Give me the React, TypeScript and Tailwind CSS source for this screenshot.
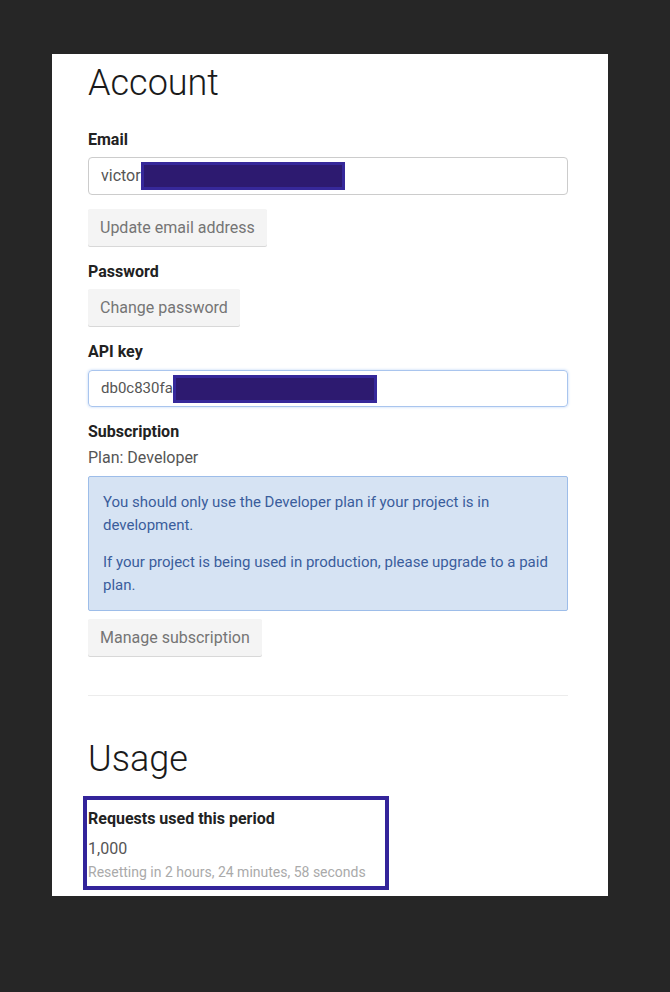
import React from 'react';

const Redacted = ({ width }: { width: number }) => (
  <span
    className="inline-block h-[28px] border-[3px] border-[#36289a] bg-[#2d1a70] align-middle"
    style={{ width }}
  />
);

const Label = ({ children }: { children: React.ReactNode }) => (
  <div className="text-[16px] font-bold leading-5 text-[#222]">{children}</div>
);

const GrayButton = ({ children }: { children: React.ReactNode }) => (
  <button className="h-[37px] rounded-[2px] bg-[#f4f4f4] px-3 text-[16px] text-[#757575] shadow-[0_1px_0_#d8d8d8]">
    {children}
  </button>
);

export default function App() {
  return (
    <div
      className="min-h-[992px] bg-[#262626] pt-[54px]"
      style={{ fontFamily: 'Roboto, "Liberation Sans", sans-serif' }}
    >
      <div className="ml-[52px] w-[556px] bg-white pb-[6px] pl-[36px] pr-[40px] pt-[7px]">
        {/* Account */}
        <h1 className="text-[36px] font-light leading-[44px] text-[#1a1a1a]">Account</h1>

        <div className="mt-[25px]">
          <Label>Email</Label>
          <div className="mt-[7px] flex h-[38px] items-center rounded-[4px] border border-[#cccccc] pl-[12px] text-[16px] text-[#555]">
            victor
            <Redacted width={204} />
          </div>
          <div className="mt-[14px]">
            <GrayButton>Update email address</GrayButton>
          </div>
        </div>

        <div className="mt-[16px]">
          <Label>Password</Label>
          <div className="mt-[7px]">
            <GrayButton>Change password</GrayButton>
          </div>
        </div>

        <div className="mt-[16px]">
          <Label>API key</Label>
          <div className="mt-[8px] flex h-[37px] items-center rounded-[4px] border border-[#a9c5ee] pl-[12px] text-[15px] text-[#555] shadow-[0_0_3px_#bcd3f5]">
            db0c830fa
            <Redacted width={204} />
          </div>
        </div>

        <div className="mt-[15px]">
          <Label>Subscription</Label>
          <div className="mt-[6px] text-[16px] leading-5 text-[#555]">Plan: Developer</div>
          <div className="mt-[8px] rounded-[2px] border border-[#9dbde9] bg-[#d6e3f3] px-[14px] py-[14px] text-[15px] leading-[22.5px] text-[#3a5d9c]">
            <p>You should only use the Developer plan if your project is in development.</p>
            <p className="mt-[15px]">If your project is being used in production, please upgrade to a paid plan.</p>
          </div>
          <div className="mt-[8px]">
            <GrayButton>Manage subscription</GrayButton>
          </div>
        </div>

        <hr className="mt-[39px] border-t border-[#ececec]" />

        {/* Usage */}
        <h1 className="mt-[41px] text-[36px] font-light leading-[44px] text-[#1a1a1a]">Usage</h1>

        <div className="-ml-[5px] mt-[15px] w-[306px] border-4 border-[#33249a] pb-[4px] pl-[1px] pt-[9px]">
          <div className="text-[16px] font-bold leading-5 text-[#222]">Requests used this period</div>
          <div className="mt-[10px] text-[16px] leading-5 text-[#555]">1,000</div>
          <div className="mt-[3px] text-[14px] leading-5 text-[#aaa]">Resetting in 2 hours, 24 minutes, 58 seconds</div>
        </div>
      </div>
    </div>
  );
}
